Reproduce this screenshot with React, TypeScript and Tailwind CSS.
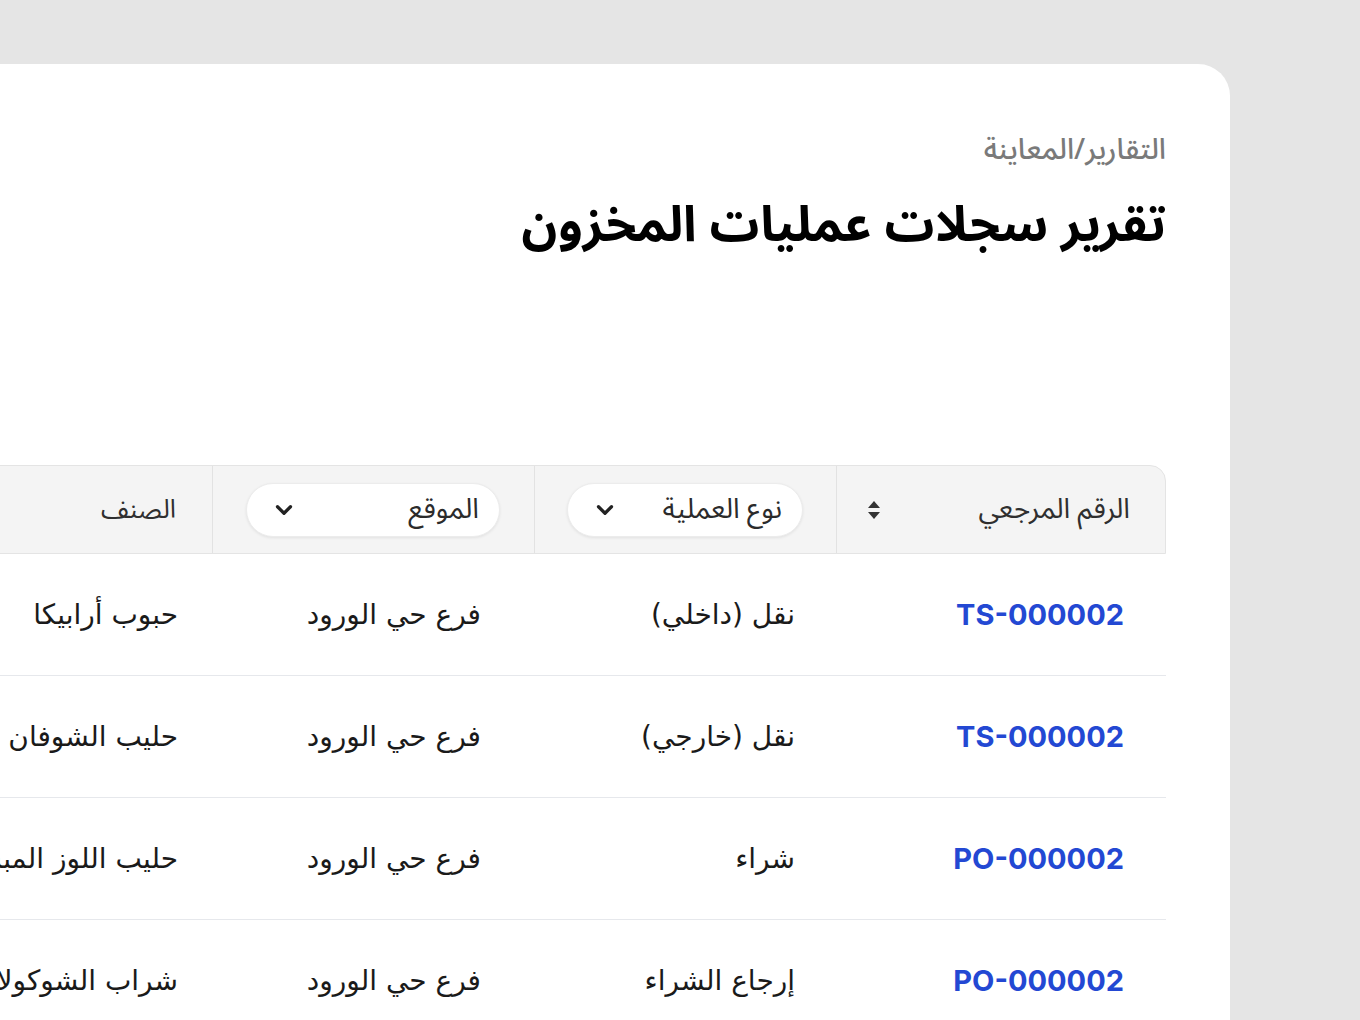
import { ChevronDown } from 'lucide-react';

type Row = {
	ref: string;
	op: string;
	location: string;
	item: string;
};

const rows: Row[] = [
	{ ref: 'TS-000002', op: 'نقل (داخلي)', location: 'فرع حي الورود', item: 'حبوب أرابيكا' },
	{ ref: 'TS-000002', op: 'نقل (خارجي)', location: 'فرع حي الورود', item: 'حليب الشوفان' },
	{ ref: 'PO-000002', op: 'شراء', location: 'فرع حي الورود', item: 'حليب اللوز المبستر' },
	{ ref: 'PO-000002', op: 'إرجاع الشراء', location: 'فرع حي الورود', item: 'شراب الشوكولاتة' },
];

const cols = 'grid grid-cols-[329px_302px_322px_1fr]';
const uiFont = { fontFamily: '"Noto Sans Arabic", "Noto Sans", sans-serif' };
const bodyFont = { fontFamily: '"DejaVu Sans", sans-serif' };

function SortIcon() {
	return (
		<svg width="14" height="22" viewBox="0 0 14 22" className="text-[#333]">
			<path d="M7 2 L13 9 H1 Z" fill="currentColor" />
			<path d="M7 20 L13 13 H1 Z" fill="currentColor" />
		</svg>
	);
}

function FilterPill({ label }: { label: string }) {
	return (
		<button className="flex h-[54px] w-full items-center justify-between rounded-full border border-[#ececec] bg-white pl-6 pr-5 text-[28px] text-[#2b2b2b] shadow-[0_1px_3px_rgba(0,0,0,0.08)]">
			<span>{label}</span>
			<ChevronDown size={26} strokeWidth={3} className="text-[#222]" />
		</button>
	);
}

export default function App() {
	return (
		<div
			dir="rtl"
			className="flex min-h-screen overflow-hidden bg-[#e5e5e5] pr-[130px] pt-16"
			style={uiFont}
		>
			<div className="min-h-[956px] w-[1600px] shrink-0 rounded-tr-[32px] bg-white pr-16 pt-[66px]">
				<p className="text-[29px] font-medium leading-10 text-[#7a7a7a]">
					التقارير/المعاينة
				</p>
				<h1 className="mt-6 text-[49.5px] font-bold leading-[64px] text-black">
					تقرير سجلات عمليات المخزون
				</h1>

				<div className="mt-[207px] w-[1500px]">
					<div
						className={`${cols} h-[89px] rounded-tr-2xl border border-[#e4e4e4] bg-[#f4f4f4] text-[28px] text-[#2f2f2f]`}
					>
						<div className="flex items-center justify-between border-l border-[#e2e2e2] pl-[30px] pr-[35px]">
							<span>الرقم المرجعي</span>
							<SortIcon />
						</div>
						<div className="flex items-center border-l border-[#e2e2e2] pl-[32px] pr-[33px]">
							<FilterPill label="نوع العملية" />
						</div>
						<div className="flex items-center border-l border-[#e2e2e2] pl-[33px] pr-[34px]">
							<FilterPill label="الموقع" />
						</div>
						<div className="flex items-center pr-[36px]">
							<span className="text-[26px]">الصنف</span>
						</div>
					</div>

					{rows.map((r, i) => (
						<div
							key={i}
							className={`${cols} h-[122px] items-center border-b border-[#e6e8ec] text-[28px] text-[#1a1a1a]`}
							style={bodyFont}
						>
							<div className="pr-[42px]">
								<span
									className="text-[29px] font-bold text-[#2348d3]"
									style={{ fontFamily: 'Inter, sans-serif' }}
								>
									{r.ref}
								</span>
							</div>
							<div className="pr-[42px]">{r.op}</div>
							<div className="pr-[54px]">{r.location}</div>
							<div className="whitespace-nowrap pr-[35px]">{r.item}</div>
						</div>
					))}
				</div>
			</div>
		</div>
	);
}
